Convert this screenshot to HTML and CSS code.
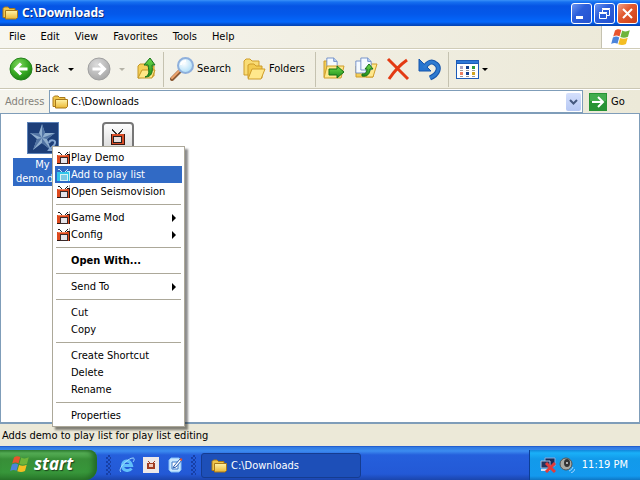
FILE: index.html
```html
<!DOCTYPE html>
<html lang="en">
<head>
<meta charset="utf-8">
<title>C:\Downloads</title>
<link rel="stylesheet" href="styles.css">
</head>
<body>
<svg class="defs" aria-hidden="true">
  <defs>
    <linearGradient id="gold" x1="0" y1="0" x2="0" y2="1"><stop offset="0" stop-color="#fff3a8"/><stop offset="1" stop-color="#ebb834"/></linearGradient>
    <radialGradient id="green" cx=".4" cy=".3" r=".75"><stop offset="0" stop-color="#7fd65c"/><stop offset=".6" stop-color="#35a821"/><stop offset="1" stop-color="#1c7f14"/></radialGradient>
    <radialGradient id="grey" cx=".4" cy=".3" r=".75"><stop offset="0" stop-color="#dcdcdc"/><stop offset="1" stop-color="#a4a4a4"/></radialGradient>
    <radialGradient id="lens" cx=".4" cy=".35" r=".7"><stop offset="0" stop-color="#ffffff"/><stop offset="1" stop-color="#a9dcf8"/></radialGradient>
    <linearGradient id="arrow" x1="0" y1="0" x2="0" y2="1"><stop offset="0" stop-color="#6edb4c"/><stop offset="1" stop-color="#1d8c1a"/></linearGradient>
    <linearGradient id="plate" x1="0" y1="0" x2="0" y2="1"><stop offset="0" stop-color="#ffffff"/><stop offset="1" stop-color="#d4d4d4"/></linearGradient>
    <symbol id="folder" viewBox="0 0 16 16">
      <path d="M1 3.500 2.500 2H6l1.500 1.500H13V12.500H1z" fill="#f0c64c" stroke="#a8791a"/>
      <path d="M3.500 5.500H15.500V12.500L14 14H3.500z" fill="url(#gold)" stroke="#a8791a"/>
    </symbol>
    <symbol id="flag" viewBox="0 0 20 18">
      <path d="M4 2.500C6.500 .5 8.500 1 10.300 2L8.500 8.500C6.500 7.300 4.500 7.300 2.200 8.500z" fill="#e8542c"/>
      <path d="M11.200 2.500C13.500 3.700 16 3.700 18.800 2.300L17 8.700C14.300 10 11.800 10 9.400 8.900z" fill="#6fb53a"/>
      <path d="M1.900 9.500C4.200 8.300 6.300 8.300 8.200 9.500L6.500 15.800C4.500 14.600 2.500 14.700 .2 15.900z" fill="#4c84da"/>
      <path d="M9.100 9.900C11.500 11 14 11 16.700 9.700L15 16C12.300 17.400 9.800 17.300 7.300 16.200z" fill="#f4be22"/>
    </symbol>
    <symbol id="tv" viewBox="0 0 14 14" shape-rendering="crispEdges">
      <path d="M1 1h2v1h1v1h1v1H4V3H3V2H1zM8 3h1V2h1V1h1v1h-1v1h-1v1H8z" fill="#222"/>
      <path d="M12 0h1v3h-1z" fill="#b8b0b0"/>
      <path d="M0 4h13v9H0z" fill="#de4a1e"/><path d="M10 3h3v1h-3zM12 4h1v9h-1zM0 12h3v1H0z" fill="#2a1512"/>
      <path d="M3 6h8v7H3z" fill="#3a2a2a"/><path d="M4 7h6v5H4z" fill="#e4e4ea"/>
      <path d="M1 4h8v1H1z" fill="#f08058"/>
    </symbol>
    <symbol id="tv-hot" viewBox="0 0 14 14" shape-rendering="crispEdges">
      <path d="M1 1h2v1h1v1h1v1H4V3H3V2H1zM8 3h1V2h1V1h1v1h-1v1h-1v1H8z" fill="#c8e9f4"/>
      <path d="M0 4h13v9H0z" fill="#2fc6ea"/><path d="M10 3h3v1h-3zM12 4h1v9h-1z" fill="#bdf0f6"/>
      <path d="M3 6h8v7H3z" fill="#d5f4f5"/><path d="M4 7h6v5H4z" fill="#7cc9e4"/>
    </symbol>
    <symbol id="page" viewBox="0 0 14 16"><path d="M1 1h8l4 4v10H1z" fill="#f5faff" stroke="#6686c4"/><path d="M9 1v4h4" fill="#b9d2f5" stroke="#6686c4"/></symbol>
  </defs>
</svg>

<div class="desktop">
<header class="titlebar">
  <svg class="i16"><use href="#folder"/></svg>
  <h1>C:\Downloads</h1>
  <div class="caption">
    <button aria-label="Minimize"><svg viewBox="0 0 19 19"><path d="M4 12h7v3H4z" fill="#fff"/></svg></button>
    <button aria-label="Restore"><svg viewBox="0 0 19 19"><path d="M7.500 8V5.500h7v6H12M7 4.500h8M4.500 9.500h7v5h-7zM4 8.500h8" fill="none" stroke="#fff"/></svg></button>
    <button class="close" aria-label="Close"><svg viewBox="0 0 19 19"><path d="m5 5 9 9m0-9-9 9" stroke="#fff" stroke-width="2"/></svg></button>
  </div>
</header>

<nav class="menubar" aria-label="Menu bar">
  <button>File</button><button>Edit</button><button>View</button><button>Favorites</button><button>Tools</button><button>Help</button>
  <div class="brand"><svg><use href="#flag"/></svg></div>
</nav>

<div class="toolbar" role="toolbar" aria-label="Standard buttons">
  <button class="back"><svg class="i24" viewBox="0 0 24 24"><circle cx="12" cy="12" r="11" fill="url(#green)" stroke="#26821d"/><path d="M18.500 12H7M12 6.500 6.500 12l5.500 5.500" fill="none" stroke="#fff" stroke-width="3"/></svg><span>Back</span><i class="caret"></i></button>
  <button class="forward" disabled aria-label="Forward"><svg class="i24" viewBox="0 0 24 24"><circle cx="12" cy="12" r="11" fill="url(#grey)" stroke="#a0a0a0"/><path d="M5.500 12H17M12 6.500l5.500 5.500-5.500 5.500" fill="none" stroke="#fff" stroke-width="3"/></svg><i class="caret"></i></button>
  <button class="up" aria-label="Up"><svg class="i24" viewBox="0 0 24 24"><path d="M1 21V9l2-2h5l2 2h7v10z" fill="#f5cf58" stroke="#c49724"/><path d="m1 21 4-8h13l-3 8z" fill="#ffe787" stroke="#c49724"/><path d="M8 20c5-2 4-6 3-12H7l6-7 5 7h-3c1 7 0 12-7 12z" fill="url(#arrow)" stroke="#17711a"/></svg></button>
  <div class="rule"></div>
  <button class="search"><svg class="i24" viewBox="0 0 24 24"><path d="m2 22 8-8" stroke="#8b5a35" stroke-width="4" stroke-linecap="round"/><path d="m2 21 7-7" stroke="#eda46e" stroke-width="2" stroke-linecap="round"/><circle cx="15.500" cy="8.500" r="7.500" fill="url(#lens)" stroke="#8fb0dc" stroke-width="2"/><path d="M11 8c0-3 3-4 5-4" fill="none" stroke="#fff" stroke-width="2"/></svg><span>Search</span></button>
  <button class="folders"><svg class="i24" viewBox="0 0 24 24"><path d="M1 18V4l2-2h4l2 2h7v14z" fill="#f9dc75" stroke="#cf9d2a"/><path d="M5 21V8l2-1h4l2 2h6v12z" fill="#f3cb50" stroke="#cf9d2a"/><path d="m5 22 4-10h13l-4 10z" fill="#ffe88c" stroke="#cf9d2a"/></svg><span>Folders</span></button>
  <div class="rule"></div>
  <div class="tools">
    <button aria-label="Move to"><svg class="i24" viewBox="0 0 24 24"><path d="M2 20V4h4v-2h2" fill="#f3cd56" stroke="#cf9d2a"/><svg x="4" y="0" width="12" height="14"><use href="#page"/></svg><path d="m2 21 3-12h17l-3 12z" fill="#ffe88c" stroke="#cf9d2a"/><path d="M7 12h8V9l7 6-7 6v-3H7z" fill="url(#arrow)" stroke="#17711a"/></svg></button>
    <button aria-label="Copy to"><svg class="i24" viewBox="0 0 24 24"><path d="M2 20V9h17v11H2z" fill="#f3cd56" stroke="#cf9d2a"/><path d="m12 20 4-13h7l-4 13z" fill="#ffe88c" stroke="#cf9d2a"/><svg x="1" y="3" width="12" height="14"><use href="#page"/></svg><svg x="6" y="0" width="12" height="14"><use href="#page"/></svg><path d="M8 17c4 0 5-2 5-5h-2l4-5 4 5h-3c0 5-3 8-8 7z" fill="url(#arrow)" stroke="#17711a"/></svg></button>
    <button aria-label="Delete"><svg class="i24" viewBox="0 0 24 24"><path d="M2 2 22 22M21 3Q11 10 3 22" fill="none" stroke="#e33a12" stroke-width="3"/></svg></button>
    <button aria-label="Undo"><svg class="i24" viewBox="0 0 24 24"><path d="M12 21c9-4 10-11 6-14-4-4-8-2-12 4" fill="none" stroke="#1756ac" stroke-width="5"/><path d="M1 2v12h12z" fill="#2674cf" stroke="#1756ac"/><path d="M12 21c9-4 10-11 6-14-4-4-8-2-12 4" fill="none" stroke="#2f7bd0" stroke-width="3"/></svg></button>
  </div>
  <div class="rule"></div>
  <button class="views" aria-label="Views"><svg class="i24" viewBox="0 0 24 24" shape-rendering="crispEdges"><path d="M1 3h23v19H1z" fill="#1c5bb8"/><path d="M2 7h21v14H2z" fill="#fff"/><path d="M2 4h21v2H2z" fill="#2e78d6"/><path d="M5 9h3v3H5z" fill="#a9a3c4"/><path d="M11 9h3v3h-3zM11 15h3v3h-3z" fill="#14408f"/><path d="M17 9h3v3h-3z" fill="#2c9a3c"/><path d="M5 15h3v3H5z" fill="#ee8062"/><path d="M17 15h3v3h-3z" fill="#d0a51f"/><path d="M5 13.500h3M11 13.500h3M17 13.500h3M5 19.500h3M11 19.500h3M17 19.500h3" stroke="#9a9a9a"/></svg><i class="caret"></i></button>
</div>

<form class="address">
  <label for="path">Address</label>
  <div class="combo">
    <svg class="i16"><use href="#folder"/></svg>
    <input id="path" type="text" value="C:\Downloads">
    <button type="button" aria-label="Show addresses"><svg viewBox="0 0 15 18"><path d="m4 7 3.500 3.500L11 7" fill="none" stroke="#45597f" stroke-width="2"/></svg></button>
  </div>
  <button type="button" class="go"><svg viewBox="0 0 18 18"><path d="M0 0h18v18H0z" fill="#279334"/><path d="M1 1h16v7H1z" fill="#43ad4d"/><path d="M3 9h11M9 4l5 5-5 5" fill="none" stroke="#fff" stroke-width="2"/></svg><span>Go</span></button>
</form>

<main class="files">
  <button class="file selected">
    <svg viewBox="0 0 32 32"><path d="M0 0h32v32H0z" fill="#5c82b8"/><path d="M1 1h30v30H1z" fill="#1d3e78"/><path d="m15 2 3 9h10l-8 6 4 11-9-7-9 7 4-11-7-6h9z" fill="#90aece"/><path d="m15 2 3 9-3 5zM28 11l-13 5 5 1zM24 28l-9-12v5zM6 28l9-12-5 1zM3 11l12 5-3-5z" fill="#5274a4"/><path d="M22 21c1-4 7-3 6 0 0 3-4 4-6 7h7" fill="none" stroke="#86a8d4" stroke-width="2"/></svg>
    <span>My demo.dm2</span>
  </button>
  <button class="file" aria-label="Seismovision">
    <svg viewBox="0 0 32 32"><rect x="1" y="1" width="30" height="30" rx="3" fill="url(#plate)" stroke="#777" stroke-width="2"/><g shape-rendering="crispEdges"><path d="M10 7h1v1h1v1h1v1h1v1h1v1h-2v-1h-1v-1h-1V9h-1zM19 8h1V7h1v1h-1v2h-1v1h-1v1h-2v-1h1v-1h1V9h1z" fill="#333"/><path d="M9 12h14v11H9z" fill="#3a1711"/><path d="M10 12h12v10H10z" fill="#d84c26"/><path d="M11 14h9v7h-9z" fill="#222"/><path d="M12 15h7v5h-7z" fill="#e8dcda"/></g></svg>
  </button>
</main>

<div class="context" role="menu">
  <button role="menuitem"><svg><use href="#tv"/></svg>Play Demo</button>
  <button role="menuitem" class="hot"><svg><use href="#tv-hot"/></svg>Add to play list</button>
  <button role="menuitem"><svg><use href="#tv"/></svg>Open Seismovision</button>
  <hr>
  <button role="menuitem" class="sub"><svg><use href="#tv"/></svg>Game Mod</button>
  <button role="menuitem" class="sub"><svg><use href="#tv"/></svg>Config</button>
  <hr>
  <button role="menuitem" class="default">Open With...</button>
  <hr>
  <button role="menuitem" class="sub">Send To</button>
  <hr>
  <button role="menuitem">Cut</button>
  <button role="menuitem">Copy</button>
  <hr>
  <button role="menuitem">Create Shortcut</button>
  <button role="menuitem">Delete</button>
  <button role="menuitem">Rename</button>
  <hr>
  <button role="menuitem">Properties</button>
</div>

<div class="status">Adds demo to play list for play list editing</div>

<footer class="taskbar">
  <button class="start"><svg><use href="#flag"/></svg><span>start</span></button>
  <div class="quick">
    <button aria-label="Internet Explorer"><svg viewBox="0 0 16 16"><path d="M12.500 11.500C10 15 3.500 14 3.500 8.500S11 2 12.500 8.500H5" fill="none" stroke="#62c0fa" stroke-width="3"/><path d="M2 15C-2 12 9 1 14 1c2 0 1 3 0 4" fill="none" stroke="#a4e1ff"/></svg></button>
    <button aria-label="Seismovision"><svg viewBox="0 0 16 16" shape-rendering="crispEdges"><path d="M0 0h16v16H0z" fill="#eee9e9"/><path d="M5 4h1v1h1v1h3V5h1V4h1v1h-1v1h1v6H4V6h2V5H5z" fill="#a03c22"/><path d="M6 7h4v3H6z" fill="#f0c8b8"/></svg></button>
    <button aria-label="Show Desktop"><svg viewBox="0 0 16 16"><path d="M2 3 4 1h8l2 2v10l-2 2H4l-2-2z" fill="#c8e7ff" stroke="#82bdf5"/><path d="M5 5h6v7H5z" fill="#fff" stroke="#3c78c8"/><path d="m7 9 6-7 2 1-6 7-3 1z" fill="#fff" stroke="#2b60b2"/><path d="m13 2 2 1" stroke="#e05030" stroke-width="2"/></svg></button>
  </div>
  <button class="task"><svg class="i16"><use href="#folder"/></svg><span>C:\Downloads</span></button>
  <div class="tray">
    <svg viewBox="0 0 16 16"><path d="M5 1h10v8H5z" fill="#172b58" stroke="#8ca9d8"/><path d="M1 4h9v7H1z" fill="#25345e" stroke="#a9bddd"/><path d="M1 13h9" stroke="#d6dfef" stroke-width="2"/><path d="m6 6 9 9m0-9-9 9" stroke="#e23b3b" stroke-width="3"/></svg>
    <svg viewBox="0 0 16 16"><ellipse cx="7" cy="7" rx="6" ry="6" fill="#a9aaa4" stroke="#555"/><ellipse cx="8" cy="6" rx="3" ry="4" fill="#333"/><circle cx="8" cy="6" r="1" fill="#ddd"/><path d="M10 14q3-1 4-4M12 16q3-1 4-4" fill="none" stroke="#a9d4ff"/></svg>
    <time>11:19 PM</time>
  </div>
</footer>
</div>
</body>
</html>
```
FILE: styles.css
```css
* { box-sizing: border-box; }
body { margin: 0; font: 11px/14px "DejaVu Sans Condensed", "DejaVu Sans", sans-serif; color: #000; background: #ece9d8; }
button, input { font: inherit; color: inherit; background: none; border: 0; padding: 0; margin: 0; }
button { display: flex; align-items: center; text-align: left; white-space: nowrap; }
svg { display: block; flex: none; }
.defs { position: absolute; width: 0; height: 0; }
.i16 { width: 16px; height: 16px; }
.i24 { width: 24px; height: 24px; }
.desktop { position: relative; display: flex; flex-direction: column; min-height: 100vh; }

.titlebar { display: flex; align-items: center; height: 26px; padding: 0 2px; gap: 4px; color: #fff; background: linear-gradient(#3a92f8 0, #1670f0 2px, #0554e4 6px, #0458ea 14px, #0468fc 22px, #0450d0 24px, #0342b0 26px); }
.titlebar h1 { flex: 1; margin: 0; font: bold 12px/16px "Noto Sans", sans-serif; text-shadow: 1px 1px #0a2b80; }
.caption { display: flex; gap: 2px; }
.caption button { width: 21px; height: 21px; padding: 0; border: 1px solid #fff; border-radius: 3px; background: linear-gradient(135deg, #6d95f0, #2c5fdb 40%, #2452cf); }
.caption svg { width: 19px; height: 19px; }
.caption .close { background: linear-gradient(135deg, #f0a088, #e25a30 40%, #cc3f18); }

.menubar { display: flex; align-items: stretch; height: 23px; padding-left: 9px; gap: 15px; background: linear-gradient(90deg, #f7f6f0, #ece9d8); border-bottom: 1px solid #d0ccb8; }
.brand { display: flex; align-items: center; justify-content: center; width: 39px; margin-left: auto; background: #fff; border-left: 1px solid #c5c2b0; }
.brand svg { width: 20px; height: 18px; }

.toolbar { display: flex; align-items: center; height: 40px; padding-left: 9px; background: linear-gradient(90deg, #f5f4ed, #ece9d8); border-top: 1px solid #fff; border-bottom: 1px solid #cbc7b4; }
.caret { border: 3px solid transparent; border-top-color: #000; border-bottom: 0; }
.back { gap: 2px; }
.back .caret { margin-left: 7px; }
.forward { gap: 8px; margin-left: 13px; }
.forward .caret { border-top-color: #b5b3a8; }
.up { margin-left: 12px; }
.rule { width: 1px; height: 35px; background: #c5c2b0; margin: 0 6px 0 2px; }
.search { gap: 3px; }
.folders { gap: 2px; margin-left: 12px; }
.folders + .rule { margin-left: 10px; }
.tools { display: flex; gap: 8px; }
.tools + .rule { margin-left: 6px; }
.views { gap: 3px; }

.address { display: flex; align-items: stretch; height: 24px; background: linear-gradient(90deg, #f5f4ed, #ece9d8); border-top: 1px solid #fff; }
.address label { align-self: center; width: 49px; padding-left: 5px; color: #84827a; }
.combo { display: flex; align-items: center; flex: 1; min-width: 0; padding: 0 1px 0 2px; gap: 3px; background: #fff; border: 1px solid #7f9db9; }
.combo input { flex: 1; min-width: 0; outline: 0; }
.combo button { width: 15px; height: 18px; border-radius: 2px; background: linear-gradient(#d5e0fc, #b6c8f4); }
.go { width: 51px; margin-left: 6px; gap: 4px; }
.go svg { width: 18px; height: 18px; }

.files { flex: 1; display: flex; align-items: flex-start; padding: 8px 4px; background: #fff; border: 1px solid #7f9db9; border-width: 1px 1px 2px; }
.file { flex-direction: column; width: 75px; gap: 4px; }
.file svg { width: 32px; height: 32px; }
.file span { width: 60px; text-align: center; white-space: normal; }
.selected span { color: #fff; background: #316ac5; }

.context { position: absolute; left: 52px; top: 146px; width: 133px; padding: 2px; background: #fff; border: 1px solid #aca899; box-shadow: 3px 3px 2px rgba(0, 0, 0, .45); }
.context button { position: relative; width: 100%; height: 17px; padding-left: 16px; }
.context svg { position: absolute; left: 2px; top: 2px; width: 14px; height: 14px; }
.context hr { height: 1px; margin: 4px 1px; border: 0; background: #aca899; }
.context .hot { color: #fff; background: #316ac5; }
.context .default { font-weight: bold; }
.context .sub::after { content: ""; margin: 0 6px 0 auto; border: 4px solid transparent; border-left-color: #000; border-right: 0; }

.status { display: flex; align-items: center; height: 22px; padding: 2px 2px 0; }

.taskbar { display: flex; align-items: stretch; height: 34px; padding-top: 4px; color: #fff; background: linear-gradient(#1545c0 0, #2f78e0 1px, #3c8cf0 5px, #255fdc 9px, #2359d6 28px, #1b45ac 34px); }
.start { width: 97px; padding: 0 0 2px 10px; gap: 4px; border-radius: 0 8px 12px 0; background: linear-gradient(#3a8c3c 0, #58b158 3px, #388f38 9px, #37963a 22px, #2b7a2c 30px); box-shadow: inset -4px 0 5px #236b26; font: italic bold 17px/20px "Noto Sans", sans-serif; text-shadow: 1px 1px 1px #1c421c; }
.start svg { width: 20px; height: 18px; }
.quick { display: flex; align-items: center; margin-left: 9px; gap: 8px; }
.quick::before, .quick::after { content: ""; width: 5px; height: 20px; background: conic-gradient(#173fa6 25%, transparent 0 50%, #173fa6 0 75%, transparent 0) 0 0 / 4px 4px; }
.quick svg { width: 16px; height: 16px; }
.task { width: 160px; margin: 3px 0 2px 5px; padding-left: 9px; gap: 4px; border-radius: 3px; background: #1d4fb8; border: 1px solid #153c90; }
.tray { display: flex; align-items: center; gap: 3px; margin-left: auto; padding: 0 12px 0 10px; background: linear-gradient(#1188dc 0, #1ab0f8 3px, #129aea 9px, #1399ee 26px, #0e77c5 30px); border-left: 1px solid #0b3f96; }
.tray svg { width: 16px; height: 16px; }
.tray time { margin-left: 4px; }
```
